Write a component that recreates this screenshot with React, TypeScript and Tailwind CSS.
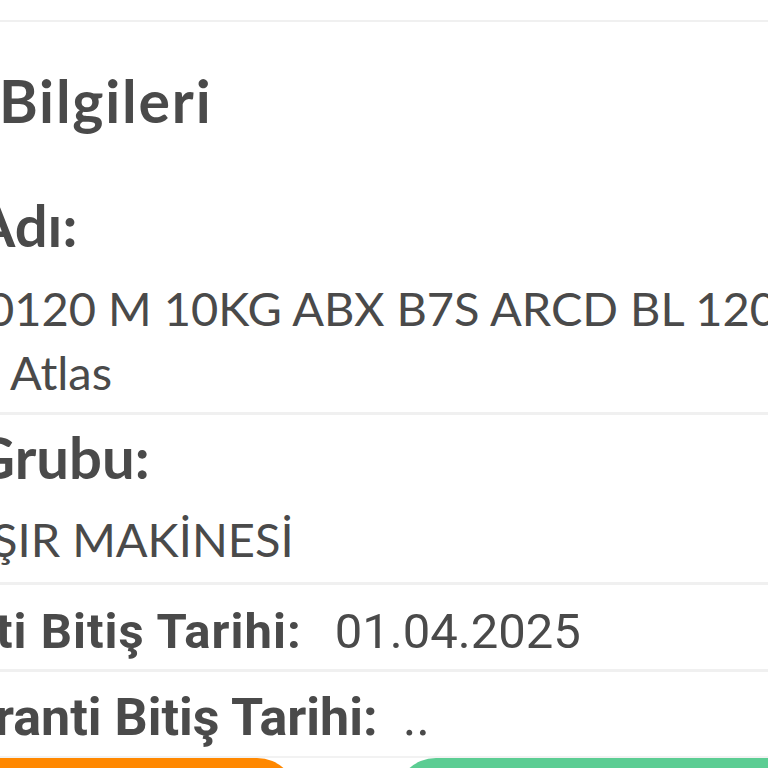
export default function App() {
  return (
    <div className="w-[768px] h-[768px] overflow-hidden bg-white flex flex-col text-[#4a4a4a] font-['Lato',sans-serif]">
      <div className="h-[20px] shrink-0" />
      <div className="h-[2px] shrink-0 bg-[#f0f0f0]" />

      <h2 className="mt-[49px] ml-[-1px] text-[59px] leading-none font-bold tracking-[1.8px] whitespace-nowrap">Bilgileri</h2>

      <div className="mt-[66px] ml-[-25px] text-[58px] leading-none font-bold whitespace-nowrap">Adı:</div>
      <div className="mt-[22px] text-[47px] leading-[64px] whitespace-nowrap">
        <div className="ml-[-13px]">0120 M 10KG ABX B7S ARCD BL 1200</div>
        <div className="ml-[10px]">Atlas</div>
      </div>
      <div className="mt-[8px] h-[3px] shrink-0 bg-[#f0f0f0]" />

      <div className="mt-[13px] ml-[-27px] text-[58px] leading-none font-bold whitespace-nowrap">Grubu:</div>
      <div className="mt-[30px] ml-[-8px] text-[47px] leading-none whitespace-nowrap">ŞIR MAKİNESİ</div>
      <div className="mt-[19px] h-[3px] shrink-0 bg-[#f0f0f0]" />

      <div className="mt-[22px] text-[49px] leading-none whitespace-nowrap font-['Roboto',sans-serif] flex">
        <span className="font-bold ml-[-4px] tracking-[1px]">ti Bitiş Tarihi:</span>
        <span className="ml-[33px]">01.04.2025</span>
      </div>
      <div className="mt-[13px] h-[3px] shrink-0 bg-[#f0f0f0]" />

      <div className="mt-[20px] text-[52px] leading-none whitespace-nowrap font-['Roboto',sans-serif] flex">
        <span className="font-bold ml-[-5px]">ranti Bitiş Tarihi:</span>
        <span className="ml-[25px]">..</span>
      </div>
      <div className="mt-[12px] h-[2px] shrink-0 bg-[#f2f2f2]" />

      <div className="flex justify-between h-[60px] shrink-0">
        <button className="w-[297px] h-full bg-[#ff8800] rounded-tr-[40px]" />
        <button className="w-[372px] h-full bg-[#5ccd93] rounded-tl-[40px]" />
      </div>
    </div>
  );
}
